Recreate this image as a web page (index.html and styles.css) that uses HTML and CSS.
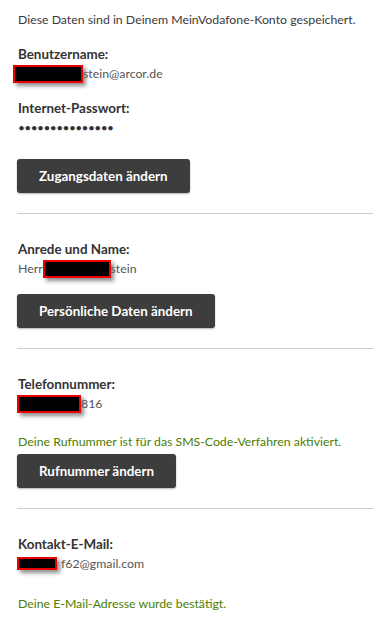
FILE: index.html
```html
<!DOCTYPE html>
<html lang="de">
<head>
<meta charset="utf-8">
<link rel="stylesheet" href="styles.css">
</head>
<body>
<div class="page">
  <section class="section first">
    <p class="intro">Diese Daten sind in Deinem MeinVodafone-Konto gespeichert.</p>
    <div class="field gap">
      <div class="label">Benutzername:</div>
      <div class="value"><span class="redact r1"></span>stein@arcor.de</div>
    </div>
    <div class="field">
      <div class="label">Internet-Passwort:</div>
      <div class="value dots">•••••••••••••••</div>
    </div>
    <button class="btn btn-pw">Zugangsdaten ändern</button>
  </section>
  <section class="section">
    <div class="field">
      <div class="label">Anrede und Name:</div>
      <div class="value">Herr <span class="redact r2"></span>stein</div>
    </div>
    <button class="btn btn-name">Persönliche Daten ändern</button>
  </section>
  <section class="section">
    <div class="field">
      <div class="label">Telefonnummer:</div>
      <div class="value"><span class="redact r3"></span>816</div>
    </div>
    <p class="ok ok-phone">Deine Rufnummer ist für das SMS-Code-Verfahren aktiviert.</p>
    <button class="btn">Rufnummer ändern</button>
  </section>
  <section class="section last">
    <div class="field">
      <div class="label">Kontakt-E-Mail:</div>
      <div class="value"><span class="redact r4"></span>f62@gmail.com</div>
    </div>
    <p class="ok ok-mail">Deine E-Mail-Adresse wurde bestätigt.</p>
  </section>
</div>
</body>
</html>
```
FILE: styles.css
```css
* { box-sizing: border-box; }
html, body { margin: 0; padding: 0; background: #fff; }
body {
  font-family: Lato, "Open Sans", sans-serif;
  font-size: 12.3px;
  line-height: 19px;
  color: #333;
}
.page { padding: 0 0 0 17px; }
.section {
  border-top: 1px solid #cccccc;
  padding: 26px 0 20px 0;
}
.section.first { border-top: none; padding-top: 10px; }
.intro { margin: 0 0 16px 1px; color: #3a3a3a; }
.field { margin: 0 0 0 1px; }
.field.gap { margin-bottom: 16px; }
.label { font-weight: bold; font-size: 13.4px; color: #333; }
.value { color: #555; }
.dots { letter-spacing: -0.6px; font-size: 12px; color: #333; }
.redact {
  display: inline-block;
  height: 18px;
  vertical-align: -5px;
  background: #000;
  border: 2px solid #ee0000;
  box-shadow: 3px 3px 4px rgba(0,0,0,0.45);
}
.r1 { width: 70px; margin-left: -5px; }
.r2 { width: 68px; margin-left: -3px; }
.r3 { width: 64px; margin-left: -1px; }
.r4 { width: 40px; height: 13px; margin-left: -1px; margin-right: 4px; vertical-align: -2px; }
.btn {
  display: block;
  height: 34px;
  padding: 0 22px;
  border: none;
  border-radius: 3px;
  background: #3d3d3d;
  color: #fff;
  font-family: inherit;
  font-size: 13.4px;
  font-weight: bold;
  box-shadow: 0 1px 2px rgba(0,0,0,0.3);
}
.btn-pw { margin-top: 22px; }
.btn-name { margin-top: 16px; }
.ok { margin: 0 0 0 1px; color: #4b7d00; }
.ok-phone { margin-top: 19px; margin-bottom: 3px; }
.ok-mail { margin-top: 21px; }
```
